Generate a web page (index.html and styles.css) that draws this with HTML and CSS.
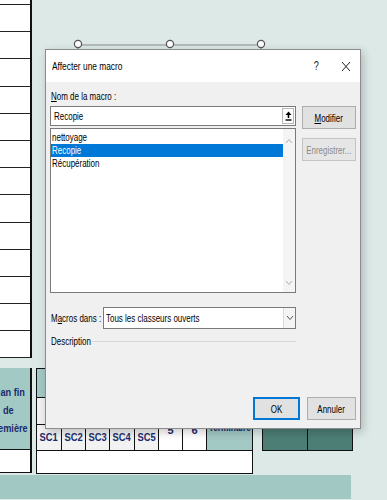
FILE: index.html
```html
<!DOCTYPE html>
<html lang="fr">
<head>
    <meta charset="UTF-8">
    <meta name="viewport" content="width=device-width, initial-scale=1.0">
    <title>Affecter une macro</title>
    <link rel="stylesheet" href="styles.css">
</head>
<body>
    <div class="sheet">
        <div class="col-left">
            <div class="cell"></div><div class="cell"></div><div class="cell"></div><div class="cell"></div>
            <div class="cell"></div><div class="cell"></div><div class="cell"></div><div class="cell"></div>
            <div class="cell"></div><div class="cell"></div><div class="cell"></div><div class="cell"></div>
            <div class="cell"></div><div class="cell"></div>
        </div>

        <div class="lower">
            <div class="blk-left">
                <div class="cell-pfin"><span class="tc">Plan fin<br>de<br>première</span></div>
                <div class="cell-blank"></div>
            </div>

            <div class="grid">
                <div class="g-head"></div>
                <div class="g-light"></div>
                <div class="g-num g-c6">5</div>
                <div class="g-num g-c7">6</div>
                <div class="g-term"><span class="tc">Terminaire</span></div>
                <div class="g-sc"><span class="tc">SC1</span></div>
                <div class="g-sc"><span class="tc">SC2</span></div>
                <div class="g-sc"><span class="tc">SC3</span></div>
                <div class="g-sc"><span class="tc">SC4</span></div>
                <div class="g-sc"><span class="tc">SC5</span></div>
                <div class="g-blank"></div>
            </div>

            <div class="blk-right">
                <div class="dark"></div>
                <div class="dark"></div>
            </div>
        </div>

        <div class="bar"></div>
    </div>

    <!-- selection handles of the shape behind the dialog -->
    <svg class="handles" width="200" height="14" viewBox="0 0 200 14">
        <line x1="8" y1="7" x2="191" y2="7" stroke="#8c8c8c" stroke-width="1.2"/>
        <line x1="8" y1="7" x2="8" y2="14" stroke="#8c8c8c" stroke-width="1.2"/>
        <line x1="191" y1="7" x2="191" y2="14" stroke="#8c8c8c" stroke-width="1.2"/>
        <circle cx="8" cy="6" r="3.6" fill="#fff" stroke="#555" stroke-width="1.2"/>
        <circle cx="100" cy="6" r="3.6" fill="#fff" stroke="#555" stroke-width="1.2"/>
        <circle cx="191" cy="6" r="3.6" fill="#fff" stroke="#555" stroke-width="1.2"/>
    </svg>

    <div class="dialog">
        <div class="titlebar">
            <span class="title"><span class="t">Affecter une macro</span></span>
            <span class="tb-btn"><span class="tc">?</span></span>
            <span class="tb-btn">
                <svg width="10" height="11" viewBox="0 0 10 11"><path d="M1 1 L9 10 M9 1 L1 10" stroke="#222" stroke-width="1" fill="none"/></svg>
            </span>
        </div>

        <div class="dlg-body">
            <div class="main">
                <div class="left">
                    <div class="label"><span class="t"><u>N</u>om de la macro :</span></div>
                    <div class="input">
                        <span class="input-text"><span class="t">Recopie</span></span>
                        <span class="up-btn">
                            <svg width="7" height="10" viewBox="0 0 7 10"><path d="M3.5 0.5 L0.5 4 H2.7 V7 H4.3 V4 H6.5 Z" fill="#000"/><rect x="0.5" y="8.3" width="6" height="1.4" fill="#000"/></svg>
                        </span>
                    </div>
                    <div class="list">
                        <div class="items">
                            <div class="item"><span class="t">nettoyage</span></div>
                            <div class="item selected"><span class="t">Recopie</span></div>
                            <div class="item"><span class="t">Récupération</span></div>
                        </div>
                        <div class="scroll">
                            <svg width="8" height="6" viewBox="0 0 8 6"><path d="M1 5 L4 1.5 L7 5" stroke="#b0b0b0" fill="none"/></svg>
                            <svg width="8" height="6" viewBox="0 0 8 6"><path d="M1 1 L4 4.5 L7 1" stroke="#b0b0b0" fill="none"/></svg>
                        </div>
                    </div>
                    <div class="macros-row">
                        <span class="macros-label"><span class="t">M<u>a</u>cros dans :</span></span>
                        <div class="select">
                            <span class="select-text"><span class="t">Tous les classeurs ouverts</span></span>
                            <span class="select-btn">
                                <svg width="8" height="6" viewBox="0 0 8 6"><path d="M1 1 L4 4.5 L7 1" stroke="#555" fill="none"/></svg>
                            </span>
                        </div>
                    </div>
                    <div class="desc-row">
                        <span class="desc-text"><span class="t">Description</span></span>
                        <span class="desc-line"></span>
                    </div>
                </div>
                <div class="side">
                    <div class="btn btn-mod"><span class="tc"><u>M</u>odifier</span></div>
                    <div class="btn btn-disabled"><span class="tc">Enregistrer...</span></div>
                </div>
            </div>

            <div class="buttons">
                <div class="btn btn-ok"><span class="tc">OK</span></div>
                <div class="btn btn-cancel"><span class="tc">Annuler</span></div>
            </div>
        </div>
    </div>
</body>
</html>
```

FILE: styles.css
```css
body {
    margin: 0;
    width: 387px;
    height: 500px;
    overflow: hidden;
    position: relative;
    background: #dce9e7;
    font-family: "Liberation Sans", Arial, sans-serif;
}

/* the screenshot's text is squeezed horizontally */
.t, .tc {
    display: inline-block;
    white-space: nowrap;
    transform: scaleX(0.76);
}
.t { transform-origin: 0 50%; }
.tc { transform-origin: 50% 50%; }

/* spreadsheet behind the dialog */
.sheet {
    display: flex;
    flex-direction: column;
}
.col-left {
    width: 32px;
    margin-top: -22.2px;
    box-sizing: border-box;
    border-right: 2px solid #111;
    background: #fff;
}
.col-left .cell {
    height: 27.2px;
    box-sizing: border-box;
    border-bottom: 1px solid #222;
}
.lower {
    display: flex;
    align-items: flex-start;
    margin-top: 9.4px;
}
.blk-left {
    width: 48px;
    margin-left: -16px;
}
.cell-pfin {
    height: 82px;
    box-sizing: border-box;
    border-right: 2px solid #111;
    border-bottom: 1px solid #111;
    background: #a3c9c5;
    color: #1c2a6e;
    font-weight: bold;
    font-size: 11.5px;
    line-height: 18px;
    text-align: center;
    padding-top: 15px;
}
.cell-pfin .tc { transform: scaleX(0.8); }
.cell-blank {
    height: 23px;
    box-sizing: border-box;
    border-right: 2px solid #111;
    border-bottom: 1px solid #111;
    background: #fff;
}
.grid {
    margin-left: 4px;
    display: grid;
    grid-template-columns: 25px 24px 24px 25px 24px 24px 24px 46px;
    grid-template-rows: 29px 27px 26px 23px;
    border-left: 1px solid #111;
    border-top: 1px solid #111;
}
.grid > div {
    border-right: 1px solid #111;
    border-bottom: 1px solid #111;
    color: #1c2a6e;
    font-weight: bold;
    font-size: 11px;
}
.g-head {
    grid-column: 1 / 8;
    background: #a3c9c5;
}
.g-light {
    grid-column: 1 / 6;
    background: #f2f2f2;
}
.g-num {
    grid-row: 2 / 4;
    background: #fff;
    display: flex;
    align-items: flex-end;
    justify-content: center;
    padding-bottom: 14px;
}
.g-c6 { grid-column: 6; }
.g-c7 { grid-column: 7; }
.g-term {
    grid-column: 8;
    grid-row: 1 / 4;
    background: #a3c9c5;
    display: flex;
    align-items: flex-end;
    justify-content: center;
    padding-bottom: 17px;
}
.g-sc {
    background: #f2f2f2;
    display: flex;
    align-items: center;
    justify-content: center;
}
.g-sc .tc { transform: scaleX(0.85); }
.g-blank {
    grid-column: 1 / 9;
    background: #fff;
}
.blk-right {
    margin-left: 9px;
    margin-top: 28px;
    display: flex;
    border-left: 1px solid #111;
    border-top: 1px solid #111;
}
.dark {
    width: 44px;
    height: 53px;
    background: #4d7e76;
    border-right: 1px solid #111;
    border-bottom: 1px solid #111;
}
.bar {
    width: 351px;
    height: 24px;
    margin-top: 1px;
    background: #a2c8c4;
}
.handles {
    position: absolute;
    left: 70px;
    top: 38px;
}

/* dialog */
.dialog {
    position: absolute;
    left: 45px;
    top: 49px;
    width: 316px;
    height: 380px;
    box-sizing: border-box;
    border: 1px solid #8c8c8c;
    background: #f0f0f0;
    box-shadow: 2px 3px 9px rgba(0,0,0,0.22);
    font-size: 10.5px;
    color: #000;
    display: flex;
    flex-direction: column;
}
.titlebar {
    height: 32px;
    background: #fff;
    display: flex;
    align-items: center;
    padding-left: 6px;
}
.title {
    flex: 1;
    font-size: 11px;
}
.tb-btn {
    width: 29px;
    display: flex;
    justify-content: center;
    font-size: 12px;
    color: #222;
}
.dlg-body {
    flex: 1;
    display: flex;
    flex-direction: column;
    padding: 8px 4px 8px 4px;
}
.main {
    display: flex;
    gap: 6px;
}
.left {
    width: 246px;
}
.label {
    height: 12px;
    line-height: 12px;
    padding-left: 1px;
    margin-bottom: 4px;
}
.input {
    height: 20px;
    box-sizing: border-box;
    border: 1px solid #7a7a7a;
    background: #fff;
    display: flex;
    align-items: center;
}
.input-text {
    flex: 1;
    padding-left: 3px;
}
.up-btn {
    width: 12px;
    height: 16px;
    margin-right: 1px;
    border: 1px solid #b8b8b8;
    box-sizing: border-box;
    display: flex;
    align-items: center;
    justify-content: center;
}
.list {
    margin-top: 2px;
    height: 165px;
    box-sizing: border-box;
    border: 1px solid #7a7a7a;
    background: #fff;
    display: flex;
}
.items {
    flex: 1;
    padding-top: 2px;
}
.item {
    height: 13px;
    line-height: 13px;
    padding-left: 1px;
}
.item.selected {
    background: #0078d7;
    color: #fff;
}
.scroll {
    width: 12px;
    background: #f4f4f4;
    display: flex;
    flex-direction: column;
    justify-content: space-between;
    align-items: center;
    padding: 9px 0 6px;
}
.macros-row {
    margin-top: 14px;
    display: flex;
    align-items: center;
}
.macros-label {
    width: 53px;
    padding-left: 1px;
    box-sizing: border-box;
}
.select {
    flex: 1;
    height: 22px;
    box-sizing: border-box;
    border: 1px solid #7a7a7a;
    background: #fff;
    display: flex;
    align-items: center;
}
.select-text {
    flex: 1;
    padding-left: 2px;
}
.select-btn {
    width: 11px;
    height: 20px;
    border-left: 1px solid #dadada;
    background: #f4f4f4;
    display: flex;
    align-items: center;
    justify-content: center;
}
.desc-row {
    margin-top: 5px;
    height: 14px;
    display: flex;
    align-items: center;
    padding-left: 1px;
}
.desc-text {
    width: 41px;
}
.desc-line {
    flex: 1;
    height: 1px;
    background: #d8d8d8;
}
.side {
    width: 54px;
    padding-top: 16px;
}
.btn {
    height: 23px;
    box-sizing: border-box;
    border: 1px solid #adadad;
    background: #e1e1e1;
    display: flex;
    align-items: center;
    justify-content: center;
}
.btn-disabled {
    margin-top: 9px;
    color: #8a8a8a;
    border-color: #c4c4c4;
    background: #e6e6e6;
}
.buttons {
    margin-top: auto;
    display: flex;
    justify-content: flex-end;
    gap: 7px;
}
.btn-ok {
    width: 47px;
    border: 2px solid #0078d7;
}
.btn-cancel {
    width: 49px;
}
```
